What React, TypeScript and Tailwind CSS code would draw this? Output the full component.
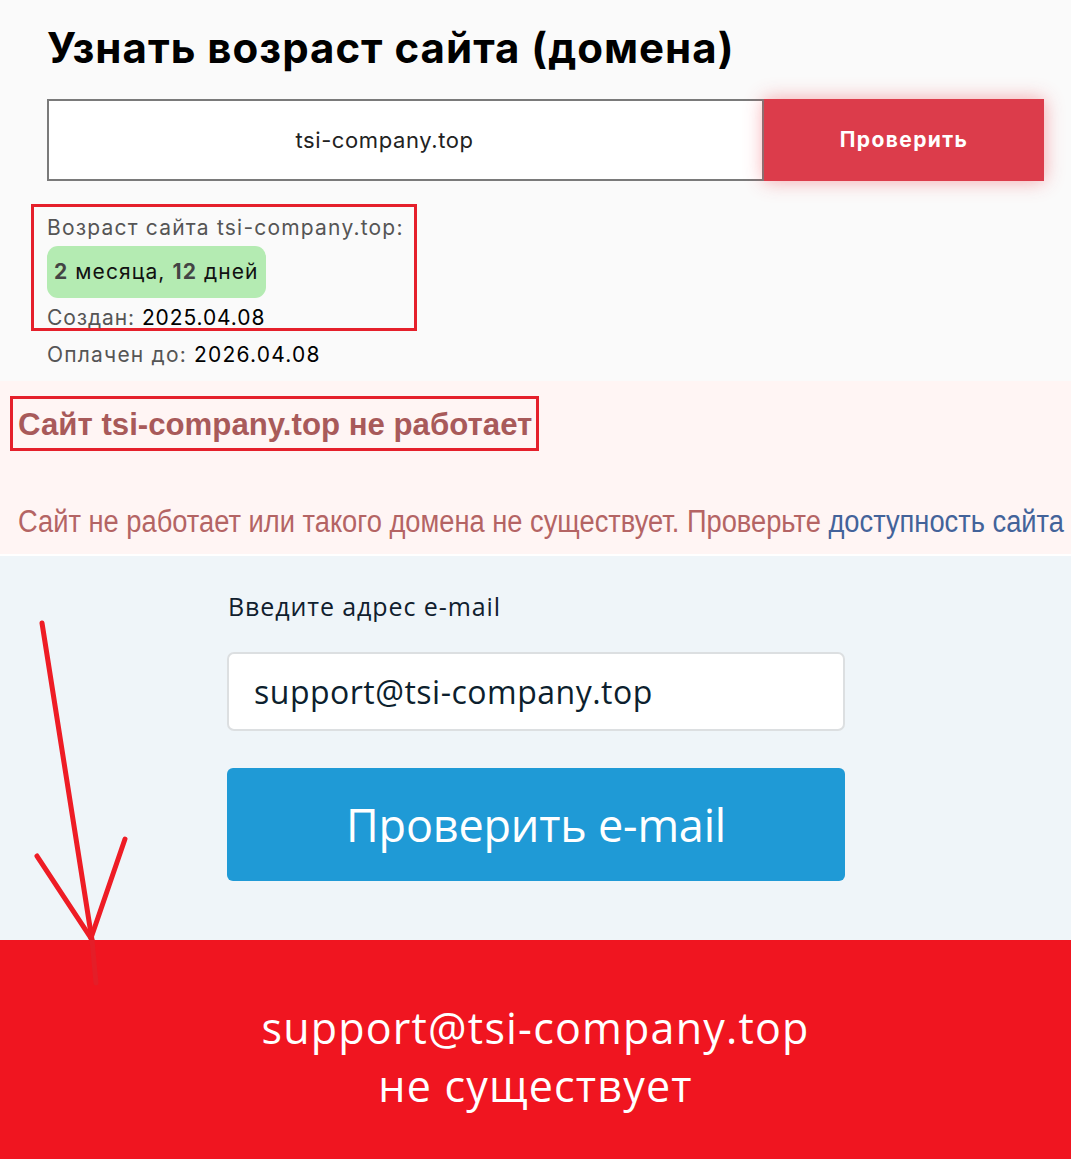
import React from "react";

export default function App() {
  return (
    <div className="relative w-[1071px] h-[1159px] overflow-hidden" style={{ fontFamily: "Inter, 'Open Sans', sans-serif" }}>
      {/* Section 1 */}
      <div className="bg-[#fafafa] h-[381px] pl-[47px] pt-[22px]">
        <h1 className="text-[42px] font-bold text-black leading-[52px] tracking-[1px]">Узнать возраст сайта (домена)</h1>
        <div className="mt-[25px] flex h-[82px]">
          <div className="w-[717px] h-[82px] border-2 border-[#7a7a7a] bg-white flex items-center justify-center pr-[42px] text-[22px] text-[#222] tracking-[0.6px]">
            tsi-company.top
          </div>
          <div className="w-[280px] h-[82px] bg-[#dc3c4b] flex items-center justify-center text-white text-[21px] font-bold tracking-[1.4px] shadow-[0_0_18px_rgba(240,60,70,0.45)]">
            Проверить
          </div>
        </div>
        <div className="relative mt-[23px] -ml-[16px] w-[386px] h-[127px] border-[3px] border-[#e5202b] pl-[13px] pt-[8px]">
          <div className="text-[21px] text-[#555] leading-[26px] tracking-[1.2px] whitespace-nowrap">Возраст сайта tsi-company.top:</div>
          <div className="mt-[5px] inline-flex items-center h-[52px] px-[7px] rounded-[11px] bg-[#b4ebb2] text-[21px] text-[#111] tracking-[1.1px]">
            <b className="text-[#444] font-bold">2</b>&nbsp;месяца,&nbsp;<b className="text-[#444] font-bold">12</b>&nbsp;дней
          </div>
          <div className="text-[21px] text-[#555] leading-[26px] mt-[7px] tracking-[0.9px]">Создан: <span className="text-black">2025.04.08</span></div>
        </div>
        <div className="text-[21px] text-[#555] leading-[26px] mt-[11px] tracking-[1.2px]">Оплачен до: <span className="text-black">2026.04.08</span></div>
      </div>

      {/* Section 2 */}
      <div className="bg-[#fff5f4] h-[175px] pt-[15px] pl-[10px] border-b-2 border-white" style={{ fontFamily: "'Liberation Sans', Arial, sans-serif" }}>
        <div className="w-[529px] h-[55px] border-[3px] border-[#e5202b] flex items-center pl-[5px]">
          <span className="inline-block origin-left scale-x-[0.975] text-[32px] font-bold text-[#a85a5a] whitespace-nowrap">Сайт tsi-company.top не работает</span>
        </div>
        <div className="mt-[48px] pl-[8px] whitespace-nowrap">
          <span className="inline-block origin-left scale-x-[0.88] text-[31px] text-[#b46464]">
            Сайт не работает или такого домена не существует. Проверьте <span className="text-[#43639a]">доступность сайта</span>
          </span>
        </div>
      </div>

      {/* Section 3 */}
      <div className="bg-[#eff5f9] h-[384px] pl-[227px] pt-[33px]" style={{ fontFamily: "'Open Sans', sans-serif" }}>
        <div className="text-[25px] text-[#10202e] leading-[34px] tracking-[0.9px] pl-[1px]">Введите адрес e-mail</div>
        <div className="mt-[29px] w-[618px] h-[79px] bg-white rounded-[7px] border-2 border-[#dcdfe1] flex items-center pl-[25px] text-[32px] font-medium text-[#0d1f2e] tracking-[0.5px]">
          support@tsi-company.top
        </div>
        <div className="mt-[37px] w-[618px] h-[113px] bg-[#1f9ad6] rounded-[6px] flex items-center justify-center text-white text-[45px] tracking-[-0.2px]">
          Проверить e-mail
        </div>
      </div>

      {/* Section 4 */}
      <div className="bg-[#f01520] h-[219px] flex flex-col items-center pt-[59px] text-white text-[43px] leading-[58px] tracking-[1.2px]" style={{ fontFamily: "'Open Sans', sans-serif" }}>
        <div>support@tsi-company.top</div>
        <div>не существует</div>
      </div>

      {/* Arrow annotation */}
      <svg className="absolute left-0 top-0 pointer-events-none" width="1071" height="1159">
        <g stroke="#ee1c25" strokeWidth="5" strokeLinecap="round" fill="none">
          <line x1="42" y1="623" x2="92" y2="940" />
          <line x1="37" y1="856" x2="91" y2="938" />
          <line x1="125" y1="839" x2="91" y2="938" />
        </g>
        <line x1="92" y1="940" x2="96" y2="983" stroke="#e41e28" strokeWidth="5" strokeLinecap="round" />
      </svg>
    </div>
  );
}
